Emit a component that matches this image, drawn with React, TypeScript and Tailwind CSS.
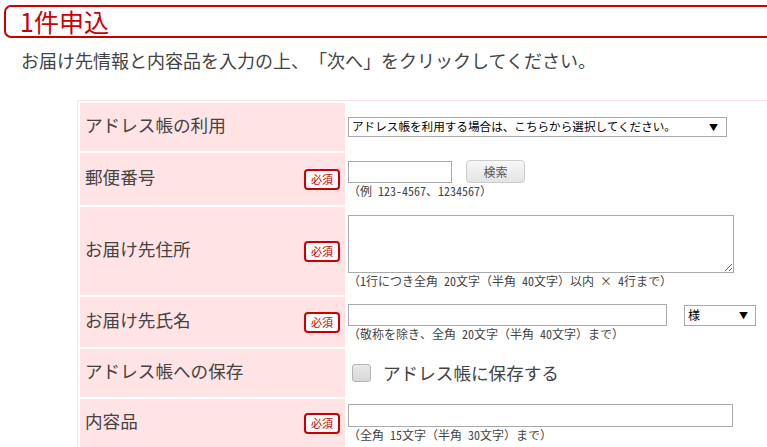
import React from "react";

const Required = () => (
  <span className="mr-[5px] flex h-[21px] w-[36px] shrink-0 items-center justify-center rounded-[4px] border-2 border-[#cc0000] bg-white text-[11px] leading-none text-[#cc0000]">
    必須
  </span>
);

const Hint = ({ children }: { children: React.ReactNode }) => (
  <p className="mt-[1px] font-['Noto_Sans_Mono_CJK_JP','Noto_Sans_CJK_JP',monospace] text-[12px] leading-[14px] text-[#444]">
    {children}
  </p>
);

const Row = ({
  label,
  required,
  height,
  children,
}: {
  label: string;
  required?: boolean;
  height: string;
  children: React.ReactNode;
}) => (
  <div className={`flex gap-[2px] ${height}`}>
    <div className="flex w-[265px] shrink-0 items-center justify-between bg-[#ffe3e5] pl-[5px] text-[17.6px] text-[#444]">
      <span className="-mt-[3px]">{label}</span>
      {required && <Required />}
    </div>
    <div className="flex flex-1 flex-col justify-center pl-[1px]">{children}</div>
  </div>
);

const App = () => {
  return (
    <div className="h-[447px] w-[767px] overflow-hidden bg-white font-['Noto_Sans_CJK_JP','Liberation_Sans',sans-serif] [text-spacing-trim:space-all]">
      <div className="ml-[4px] mt-[5px] flex h-[33px] items-center rounded-l-[7px] border-2 border-r-0 border-[#cc0000] pl-[14px]">
        <h1 className="text-[25px] leading-none text-[#cc0000]">1件申込</h1>
      </div>
      <p className="ml-[21px] mt-[9px] text-[18px] leading-[26px] text-[#444]">
        お届け先情報と内容品を入力の上、「次へ」をクリックしてください。
      </p>

      <div className="ml-[77px] mt-[27px] flex w-[720px] flex-col gap-[2px] border border-[#fbe3e5] p-[2px]">
        <Row label="アドレス帳の利用" height="h-[48px]">
          <div className="flex h-[20px] w-[379px] items-center justify-between border border-[#aaa] bg-white pl-[3px] pr-[8px] text-[11.6px] leading-none text-black">
            <span>アドレス帳を利用する場合は、こちらから選択してください。</span>
            <span className="text-[9px]">▼</span>
          </div>
        </Row>

        <Row label="郵便番号" required height="h-[52px]">
          <div className="flex items-center">
            <input className="h-[22px] w-[104px] border border-[#aaa] bg-white outline-none" />
            <button className="ml-[14px] h-[23px] w-[59px] rounded-[4px] border border-[#ccc] bg-gradient-to-b from-[#f7f7f7] to-[#e4e4e4] text-[12px] leading-none text-[#555]">
              検索
            </button>
          </div>
          <Hint>（例 123-4567、1234567）</Hint>
        </Row>

        <Row label="お届け先住所" required height="h-[88px]">
          <textarea className="block h-[58px] w-[386px] border border-[#aaa] bg-white outline-none" />
          <Hint>（1行につき全角 20文字（半角 40文字）以内 × 4行まで）</Hint>
        </Row>

        <Row label="お届け先氏名" required height="h-[50px]">
          <div className="flex items-start">
            <input className="h-[22px] w-[319px] border border-[#aaa] bg-white outline-none" />
            <div className="ml-[17px] mt-[1px] flex h-[21px] w-[72px] items-center justify-between border border-[#aaa] bg-white pl-[3px] pr-[7px] text-[12px] leading-none text-black">
              <span>様</span>
              <span className="text-[9px]">▼</span>
            </div>
          </div>
          <Hint>（敬称を除き、全角 20文字（半角 40文字）まで）</Hint>
        </Row>

        <Row label="アドレス帳への保存" height="h-[48px]">
          <label className="flex items-center">
            <span className="ml-[4px] h-[18px] w-[19px] rounded-[3px] border border-[#b5b5b5] bg-gradient-to-b from-[#e8e8e8] to-[#d8d8d8]" />
            <span className="ml-[12px] text-[17.6px] leading-none text-[#444]">アドレス帳に保存する</span>
          </label>
        </Row>

        <Row label="内容品" required height="h-[48px]">
          <input className="h-[23px] w-[385px] border border-[#aaa] bg-white outline-none" />
          <Hint>（全角 15文字（半角 30文字）まで）</Hint>
        </Row>
      </div>
    </div>
  );
};

export default App;
